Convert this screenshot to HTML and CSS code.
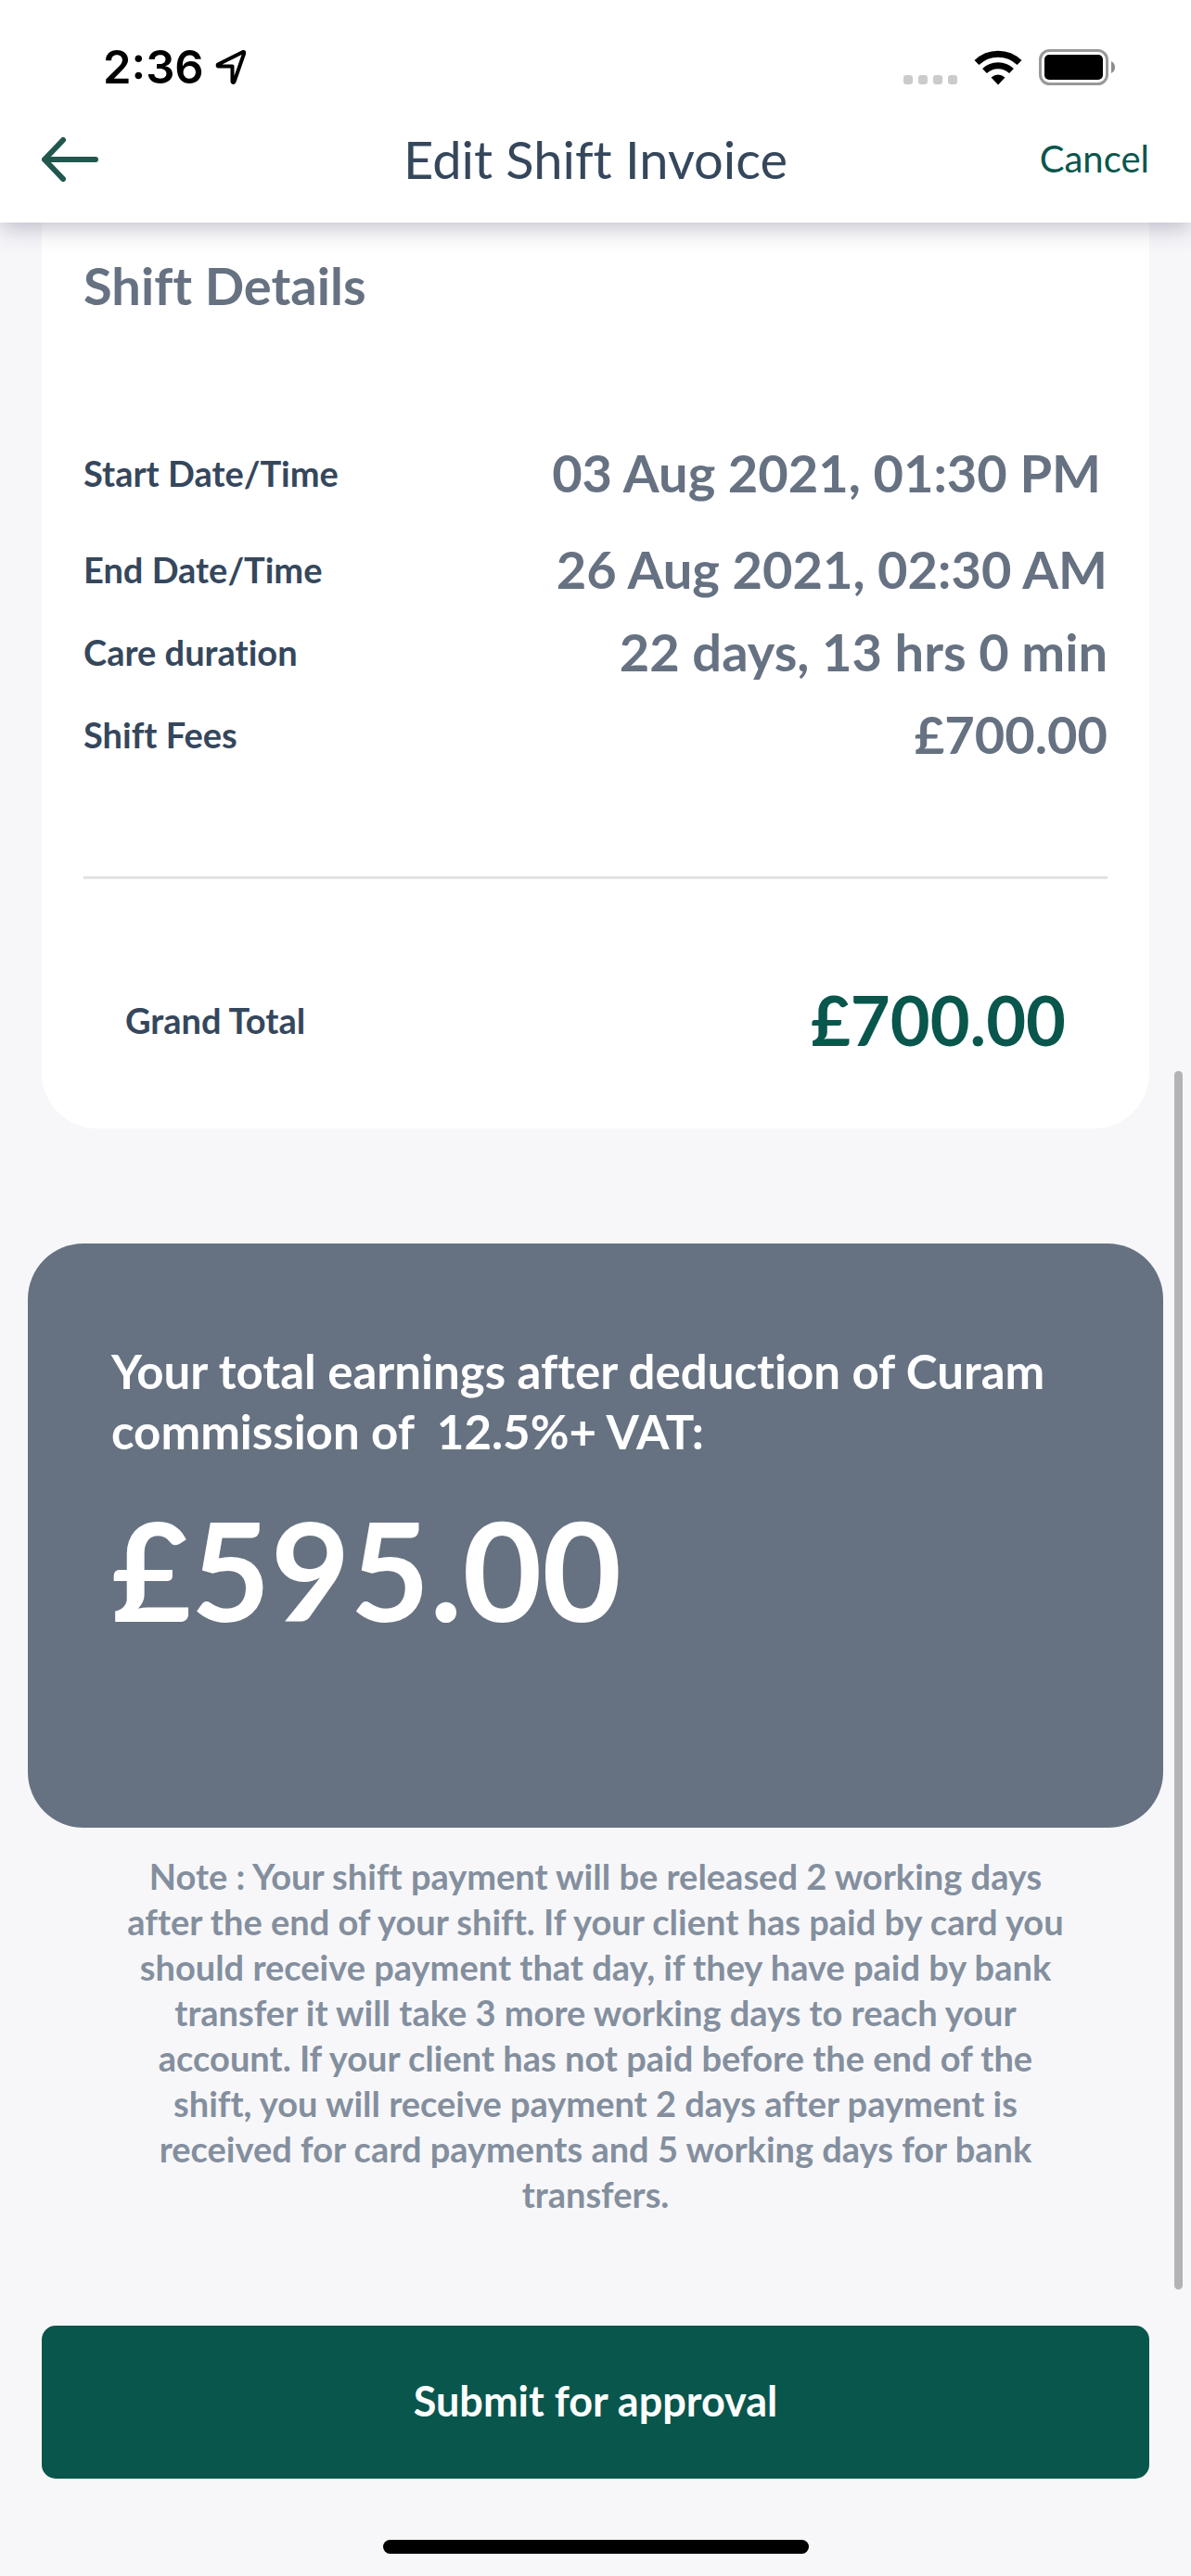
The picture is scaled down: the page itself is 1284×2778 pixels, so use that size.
FILE: index.html
```html
<!DOCTYPE html>
<html lang="en">
<head>
    <meta charset="UTF-8">
    <meta name="viewport" content="width=device-width, initial-scale=1.0">
    <title>Edit Shift Invoice</title>
    <link rel="stylesheet" href="styles.css">
</head>
<body>
    <header class="header">
        <div class="status-bar">
            <div class="status-left">
                <span class="time">2:36</span>
                <svg class="location" width="34" height="42" viewBox="0 0 34 42">
                    <path d="M30 4 L3 17.500 Q2 19.500 4 19.500 H18.500 V36 Q19.500 38 20.500 36 L31 6 Q31.500 3.500 30 4 Z" fill="none" stroke="#000" stroke-width="4" stroke-linejoin="round"/>
                </svg>
            </div>
            <div class="status-right">
                <svg width="58" height="38" viewBox="0 0 58 38" fill="#cbcbcb">
                    <rect x="0" y="27" width="10" height="10" rx="3"/>
                    <rect x="16" y="27" width="10" height="10" rx="3"/>
                    <rect x="32" y="27" width="10" height="10" rx="3"/>
                    <rect x="48" y="27" width="10" height="10" rx="3"/>
                </svg>
                <svg width="52" height="38" viewBox="0 0 52 38">
                    <path d="M3 13.500 A33 33 0 0 1 49 13.500" fill="none" stroke="#000" stroke-width="7"/>
                    <path d="M11.500 22.500 A21 21 0 0 1 40.500 22.500" fill="none" stroke="#000" stroke-width="7"/>
                    <path d="M18.500 29.500 Q26 23.500 33.500 29.500 L26 37.500 Z"/>
                </svg>
                <svg width="82" height="40" viewBox="0 0 82 40">
                    <rect x="1.500" y="1.500" width="72" height="36" rx="10" fill="none" stroke="#999" stroke-width="3"/>
                    <rect x="6" y="6" width="63" height="27" rx="5"/>
                    <path d="M78 13 Q82 15 82 19.500 Q82 24 78 26 Z" fill="#8c8c8c"/>
                </svg>
            </div>
        </div>
        <nav class="nav">
            <button class="back" aria-label="Back">
                <svg width="62" height="50" viewBox="0 0 62 50" fill="none" stroke="#22574e" stroke-width="6" stroke-linecap="round" stroke-linejoin="round">
                    <path d="M58 26 H3 M23 5 L3 26 L23 47"/>
                </svg>
            </button>
            <h1>Edit Shift Invoice</h1>
            <button class="cancel">Cancel</button>
        </nav>
    </header>

    <main class="content">
        <section class="card">
            <h2>Shift Details</h2>
            <dl class="details">
                <div class="row row-start">
                    <dt>Start Date/Time</dt>
                    <dd>03 Aug 2021, 01:30 PM</dd>
                </div>
                <div class="row">
                    <dt>End Date/Time</dt>
                    <dd>26 Aug 2021, 02:30 AM</dd>
                </div>
                <div class="row">
                    <dt>Care duration</dt>
                    <dd>22 days, 13 hrs 0 min</dd>
                </div>
                <div class="row">
                    <dt>Shift Fees</dt>
                    <dd>£700.00</dd>
                </div>
            </dl>
            <dl class="total">
                <dt>Grand Total</dt>
                <dd>£700.00</dd>
            </dl>
        </section>

        <section class="earnings">
            <p class="earnings-text">Your total earnings after deduction of Curam commission of&nbsp; 12.5%+ VAT:</p>
            <p class="earnings-amount">£595.00</p>
        </section>

        <p class="note">Note : Your shift payment will be released 2 working days after the end of your shift. If your client has paid by card you should receive payment that day, if they have paid by bank transfer it will take 3 more working days to reach your account. If your client has not paid before the end of the shift, you will receive payment 2 days after payment is received for card payments and 5 working days for bank transfers.</p>

        <button class="submit">Submit for approval</button>
    </main>

    <div class="scroll-thumb"></div>
    <div class="home-indicator"></div>
</body>
</html>
```
FILE: styles.css
```css
:root {
    --green: #09564d;
    --navy: #35475c;
    --slate: #667282;
    --page-bg: #f7f7fa;
}
* {
    margin: 0;
    padding: 0;
    box-sizing: border-box;
}
body {
    position: relative;
    display: flex;
    flex-direction: column;
    min-height: 100vh;
    background: var(--page-bg);
    color: var(--navy);
    font-family: Lato, "Liberation Sans", sans-serif;
    font-variant-ligatures: none;
}
button {
    background: none;
    border: none;
    font-family: inherit;
    cursor: pointer;
}
svg {
    display: block;
}

/* header */
.header {
    position: sticky;
    top: 0;
    z-index: 1;
    background: #fff;
    box-shadow: 0 6px 24px rgba(50, 45, 90, 0.3);
}
.status-bar {
    display: flex;
    justify-content: space-between;
    align-items: center;
    height: 105px;
    padding: 41px 82px 0 111px;
}
.status-left {
    display: flex;
    align-items: center;
    gap: 12px;
}
.time {
    font: 600 49px/64px Inter, sans-serif;
    color: #000;
}
.status-right {
    display: flex;
    align-items: center;
    gap: 18px;
}
.nav {
    display: grid;
    grid-template-columns: 1fr auto 1fr;
    align-items: center;
    height: 135px;
    padding: 0 45px 3px;
}
.nav h1 {
    font-size: 56px;
    font-weight: 400;
}
.back {
    justify-self: start;
}
.cancel {
    justify-self: end;
    font-size: 40px;
    color: var(--green);
}

/* invoice card */
.content {
    display: flex;
    flex-direction: column;
    padding: 0 45px;
}
.card {
    padding: 28px 45px 72px;
    background: #fff;
    border-radius: 0 0 60px 60px;
}
.card h2 {
    font-size: 56px;
    line-height: 80px;
    color: var(--slate);
}
.details {
    padding: 117px 0 109px;
    border-bottom: 3px solid #e2e2e2;
}
.row,
.total {
    display: flex;
    justify-content: space-between;
    align-items: center;
}
.row {
    height: 89px;
}
.row-start {
    margin-bottom: 15px;
    padding-right: 7px;
}
dt {
    font-size: 38px;
    font-weight: 700;
}
dd {
    font-size: 56px;
    font-weight: 700;
    color: var(--slate);
}
.total {
    padding: 107px 45px 0;
}
.total dd {
    font-size: 74px;
    line-height: 90px;
    color: var(--green);
}

/* earnings */
.earnings {
    margin: 124px -15px 0;
    padding: 105px 90px 189px;
    border-radius: 60px;
    background: var(--slate);
    color: #fff;
    font-weight: 700;
}
.earnings-text {
    font-size: 51px;
    line-height: 65px;
}
.earnings-amount {
    margin-top: 26px;
    font-size: 148px;
    line-height: 180px;
}
.note {
    padding: 28px 84px 0;
    font-size: 38px;
    font-weight: 700;
    line-height: 49px;
    text-align: center;
    color: #848f9e;
}
.submit {
    height: 165px;
    margin-top: 117px;
    padding-bottom: 3px;
    border-radius: 15px;
    background: var(--green);
    color: #fff;
    font-size: 45px;
    font-weight: 700;
}

.scroll-thumb {
    position: absolute;
    top: 1155px;
    right: 9px;
    width: 9px;
    height: 1314px;
    border-radius: 5px;
    background: #b3b3b5;
}
.home-indicator {
    width: 459px;
    height: 15px;
    margin: auto auto 24px;
    border-radius: 8px;
    background: #000;
}
```
